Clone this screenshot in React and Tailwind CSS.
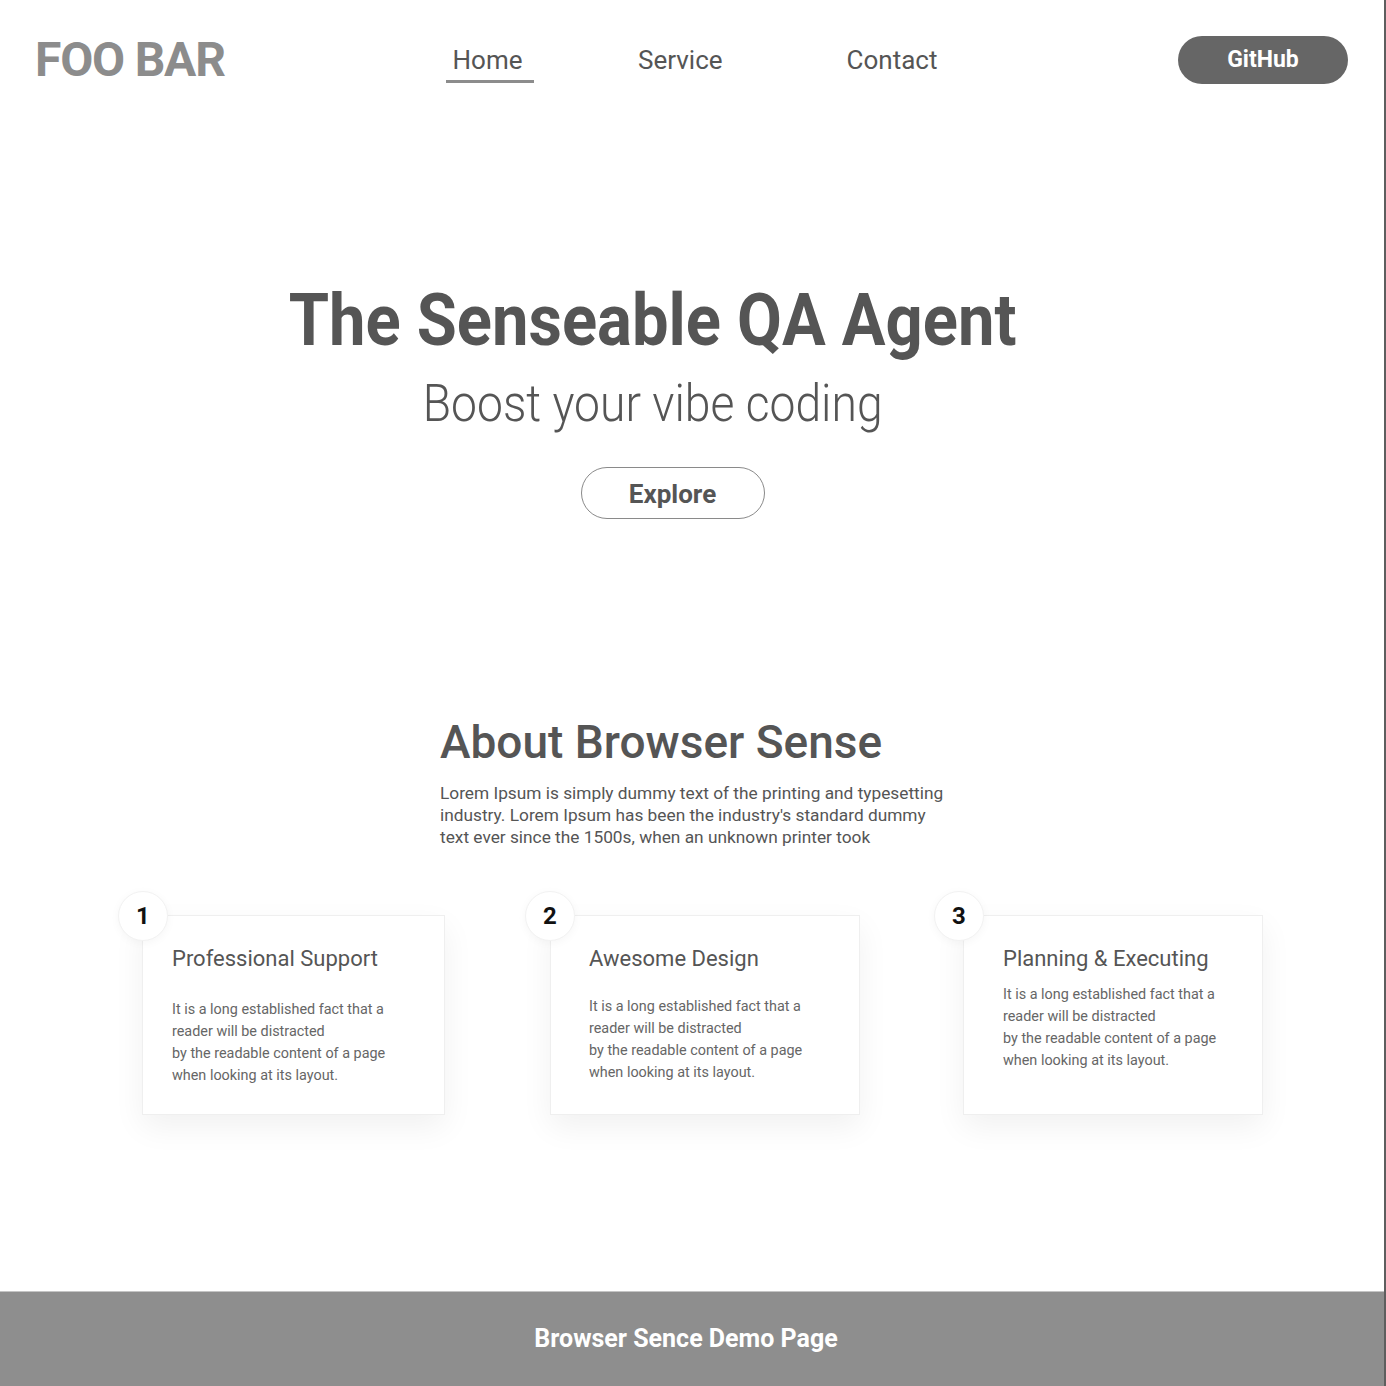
import React from 'react';

const cards = [
  {
    num: '1',
    title: 'Professional Support',
    width: 'w-[303px]',
    pad: 'pl-[29px]',
    badge: '-left-[25px]',
    gap: 'mt-[29px]',
  },
  {
    num: '2',
    title: 'Awesome Design',
    width: 'w-[310px]',
    pad: 'pl-[38px]',
    badge: '-left-[26px]',
    gap: 'mt-[26px]',
  },
  {
    num: '3',
    title: 'Planning & Executing',
    width: 'w-[300px]',
    pad: 'pl-[39px]',
    badge: '-left-[30px]',
    gap: 'mt-[14px]',
  },
];

const Card = ({ card, className }) => (
  <div
    className={`relative h-[200px] ${card.width} ${card.pad} pt-[32px] bg-white border border-[#efefef] shadow-[0_12px_30px_rgba(0,0,0,0.06)] ${className || ''}`}
  >
    <div
      className={`absolute -top-[25px] ${card.badge} w-[50px] h-[50px] rounded-full bg-white border border-[#f2f2f2] shadow-[0_2px_10px_rgba(0,0,0,0.04)] flex items-center justify-center text-[24px] font-bold text-[#111] leading-none`}
    >
      {card.num}
    </div>
    <h3 className="text-[22px] leading-none text-[#555]">{card.title}</h3>
    <p className={`${card.gap} text-[14.4px] leading-[22px] text-[#666]`}>
      It is a long established fact that a
      <br />
      reader will be distracted
      <br />
      by the readable content of a page
      <br />
      when looking at its layout.
    </p>
  </div>
);

const App = () => {
  return (
    <div className="w-[1386px] bg-white border-r-2 border-[#5e5e5e] font-['Roboto',sans-serif]">
      <header className="h-[120px] flex items-center pr-[36px]">
        <div className="w-[446px] pl-[35px] text-[48px] font-bold leading-none tracking-tight text-[#8c8c8c]">
          FOO BAR
        </div>
        <nav className="flex items-center text-[26px] leading-none text-[#555]">
          <div className="flex flex-col items-center pt-[10px]">
            <span className="-ml-[5px]">Home</span>
            <div className="mt-[7px] h-[3px] w-[88px] bg-[#8c8c8c]" />
          </div>
          <span className="ml-[104px]">Service</span>
          <span className="ml-[124px]">Contact</span>
        </nav>
        <button className="ml-auto h-[48px] w-[170px] rounded-full bg-[#666] text-white text-[23px] font-bold">
          GitHub
        </button>
      </header>

      <section className="flex flex-col items-center pr-[78px]">
        <h1 className="mt-[165px] text-[72px] font-bold leading-none scale-x-[0.904] text-[#555]">
          The Senseable QA Agent
        </h1>
        <p className="mt-[21px] text-[52px] font-light leading-none scale-x-[0.889] text-[#555]">
          Boost your vibe coding
        </p>
        <button className="mt-[37px] ml-[39px] h-[52px] w-[184px] pt-[3px] rounded-full border border-[#8a8a8a] text-[26px] font-bold text-[#555]">
          Explore
        </button>
      </section>

      <section className="mt-[200px] flex justify-center pl-[8px]">
        <div className="w-[512px]">
          <h2 className="text-[46px] font-medium leading-none text-[#555]">About Browser Sense</h2>
          <p className="mt-[17px] text-[17.3px] leading-[22px] text-[#555]">
            Lorem Ipsum is simply dummy text of the printing and typesetting industry. Lorem Ipsum has been the
            industry's standard dummy text ever since the 1500s, when an unknown printer took
          </p>
        </div>
      </section>

      <section className="mt-[67px] flex pl-[142px]">
        <Card card={cards[0]} />
        <Card card={cards[1]} className="ml-[105px]" />
        <Card card={cards[2]} className="ml-[103px]" />
      </section>

      <footer className="mt-[176px] h-[95px] bg-[#8e8e8e] border-t border-[#c4c4c4] flex items-center justify-center pr-[12px]">
        <span className="text-[25px] font-bold text-white">Browser Sence Demo Page</span>
      </footer>
    </div>
  );
};

export default App;
